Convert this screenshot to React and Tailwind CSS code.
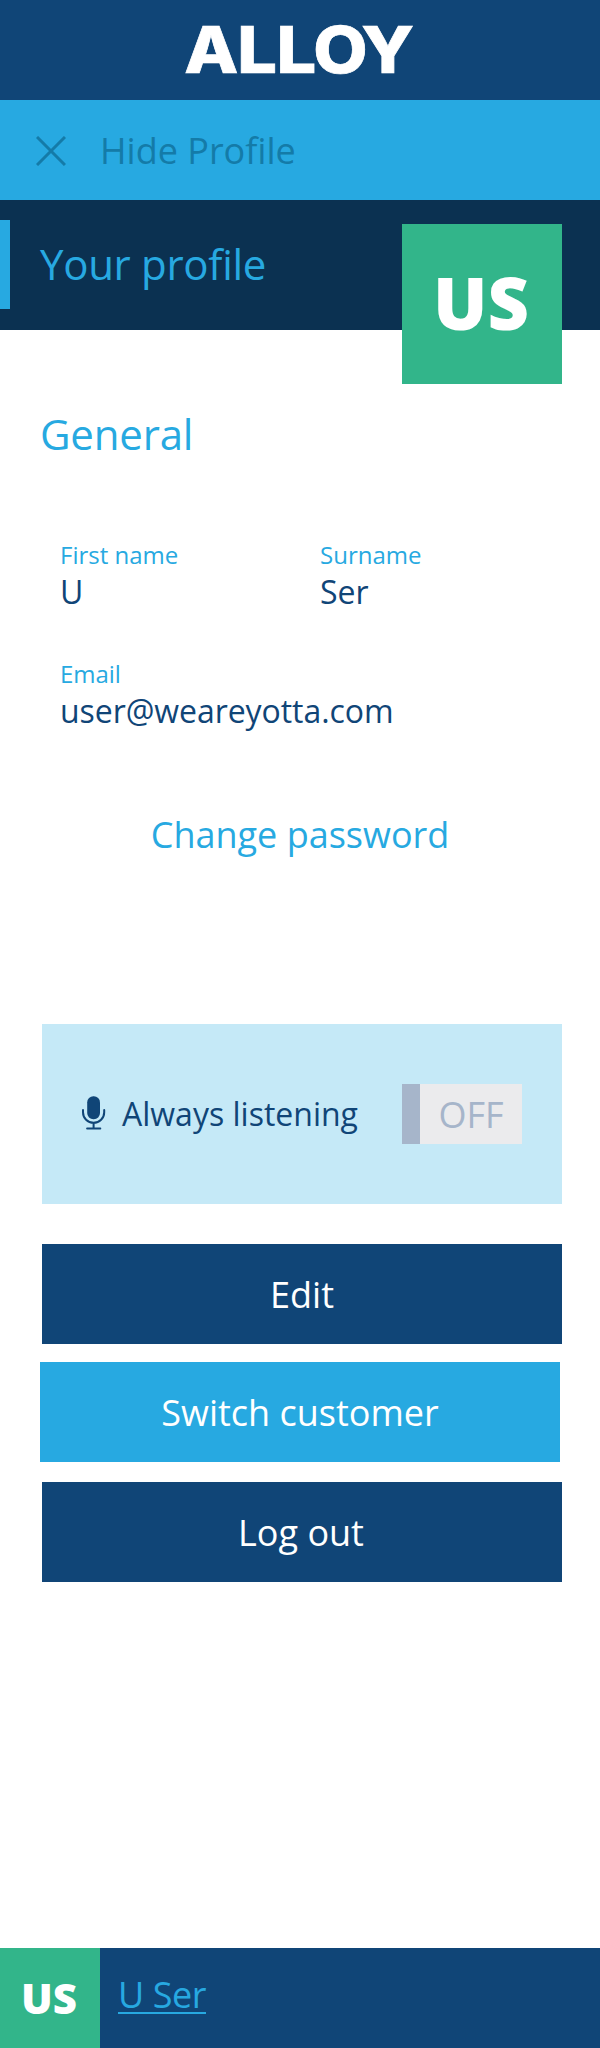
import React from "react";

function Field({ label, value, className }) {
  return (
    <div className={className}>
      <div className="h-[34px] text-[24px] leading-[34px] text-[#27a9e1]">{label}</div>
      <div className="h-[40px] text-[32px] leading-[40px] text-[#104577]">{value}</div>
    </div>
  );
}

function Logo() {
  return (
    <svg width="240" height="100" viewBox="180 0 240 100" role="img" aria-label="Alloy">
      <text
        transform="scale(1.09 1)"
        x="169.1 217.6 253.7 287.4 331.4"
        y="73"
        fill="#fff"
        stroke="#fff"
        strokeWidth="0.7"
        fontFamily="Inter, sans-serif"
        fontWeight="800"
        fontSize="64.5"
      >
        ALLOY
      </text>
    </svg>
  );
}

function MicIcon() {
  return (
    <svg className="mb-[3px]" width="24" height="34" viewBox="0 0 24 34" fill="none" stroke="#104577" strokeWidth="2" strokeLinecap="round">
      <rect x="5.2" y="0.2" width="12.8" height="23" rx="6.2" fill="#104577" stroke="none" />
      <path d="M1 14v2.2a10.6 10.6 0 0 0 21.2 0V14M11.6 26.8V32M5.1 32.6h13.2" />
    </svg>
  );
}

export default function App() {
  return (
    <div className="flex h-[2048px] w-[600px] flex-col bg-white font-['Open_Sans',sans-serif]">
      <header className="flex h-[100px] justify-center bg-[#104577]">
        <Logo />
      </header>

      <button className="flex h-[100px] items-center bg-[#27a9e1] pl-9 text-[36px] leading-[100px] text-[#147ba8]">
        <svg className="mr-[34px] mt-px" width="30" height="30" viewBox="0 0 30 30" fill="none" stroke="#147ba8" strokeWidth="3">
          <path d="M1 1l28 28M29 1L1 29" />
        </svg>
        <span className="pt-0.5">Hide Profile</span>
      </button>

      <section className="flex h-[130px] items-start justify-between bg-[#0b3151] pr-[38px]">
        <h1 className="mt-5 h-[89px] border-l-[10px] border-[#27a9e1] pl-[30px] text-[42px] leading-[87px] tracking-[-0.3px] text-[#27a9e1]">
          Your profile
        </h1>
        <div className="mt-6 h-[160px] w-[160px] bg-[#32b58a] pr-0.5 text-center text-[72px] font-extrabold leading-[156px] text-white">
          US
        </div>
      </section>

      <h2 className="mt-[74px] h-[60px] pl-10 text-[42px] leading-[60px] tracking-[-0.2px] text-[#27a9e1]">General</h2>

      <div className="mt-[74px] grid h-[193px] grid-cols-[260px_240px] content-between pl-[60px]">
        <Field label="First name" value="U" />
        <Field label="Surname" value="Ser" />
        <Field label="Email" value="user@weareyotta.com" className="col-span-2 tracking-[-0.06px]" />
      </div>

      <button className="mt-[53px] h-[100px] text-[36px] leading-[102px] text-[#27a9e1]">Change password</button>

      <div className="ml-[42px] mt-[140px] flex h-[180px] w-[520px] items-center justify-between bg-[#c5e9f7] pl-10 pr-10">
        <div className="flex items-center text-[32px] text-[#104577]">
          <MicIcon />
          <span className="ml-4 leading-[60px]">Always listening</span>
        </div>
        <div className="flex h-[60px] w-[120px] bg-[#ebebed] text-[36px] leading-[62px] text-[#a6b5ca]">
          <span className="w-[18px] bg-[#a6b5ca]" />
          <span className="flex-1 text-center">OFF</span>
        </div>
      </div>

      <div className="mt-10 flex flex-col text-[36px] leading-[102px] text-white">
        <button className="ml-[42px] h-[100px] w-[520px] bg-[#104577]">Edit</button>
        <button className="ml-10 mt-[18px] h-[100px] w-[520px] bg-[#27a9e1]">Switch customer</button>
        <button className="ml-[42px] mt-5 h-[100px] w-[520px] bg-[#104577] pr-0.5">Log out</button>
      </div>

      <footer className="mt-auto flex h-[100px] bg-[#104577]">
        <div className="w-[100px] bg-[#32b58a] pr-0.5 text-center text-[42px] font-extrabold leading-[100px] text-white">US</div>
        <div className="ml-[18px] pt-[18px]">
          <a className="block h-[48px] border-b-2 border-[#27a9e1] text-[36px] leading-[58px] tracking-[-0.45px] text-[#27a9e1]">U Ser</a>
        </div>
      </footer>
    </div>
  );
}
